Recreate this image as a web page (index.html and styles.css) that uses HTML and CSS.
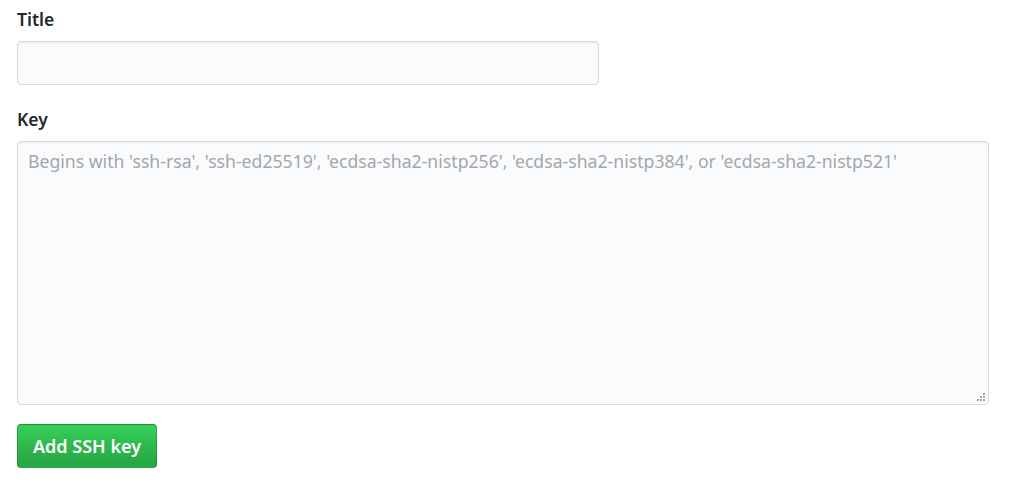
FILE: index.html
```html
<!DOCTYPE html>
<html>
<head>
<meta charset="utf-8">
<link rel="stylesheet" href="styles.css">
</head>
<body>
<form class="ssh-form">
  <div class="form-group">
    <label class="form-label" for="title">Title</label>
    <input class="form-control title-input" id="title" type="text">
  </div>
  <div class="form-group">
    <label class="form-label" for="key">Key</label>
    <div class="textarea-wrap">
      <textarea class="form-control key-input" id="key" placeholder="Begins with 'ssh-rsa', 'ssh-ed25519', 'ecdsa-sha2-nistp256', 'ecdsa-sha2-nistp384', or 'ecdsa-sha2-nistp521'"></textarea>
      <svg class="grip" width="10" height="10" viewBox="0 0 10 10">
        <rect x="7" y="1" width="2" height="2" fill="#9ea3a8"/>
        <rect x="4" y="4" width="2" height="2" fill="#9ea3a8"/>
        <rect x="7" y="4" width="2" height="2" fill="#9ea3a8"/>
        <rect x="1" y="7" width="2" height="2" fill="#9ea3a8"/>
        <rect x="4" y="7" width="2" height="2" fill="#9ea3a8"/>
        <rect x="7" y="7" width="2" height="2" fill="#9ea3a8"/>
      </svg>
    </div>
  </div>
  <button class="btn-primary" type="button">Add SSH key</button>
</form>
</body>
</html>
```

FILE: styles.css
```css
html, body {
  margin: 0;
  padding: 0;
  background: #ffffff;
}
body {
  font-family: "Noto Sans", "Open Sans", sans-serif;
  font-size: 17.5px;
  color: #24292e;
}
.ssh-form {
  display: flex;
  flex-direction: column;
  align-items: flex-start;
  padding: 7px 0 0 17px;
}
.form-group {
  display: flex;
  flex-direction: column;
  align-items: flex-start;
  margin-bottom: 22px;
}
.form-group + .form-group {
  margin-bottom: 19px;
}
.form-label {
  font-weight: 600;
  line-height: 25px;
  margin-bottom: 9px;
}
.form-control {
  box-sizing: border-box;
  font-family: inherit;
  font-size: 17.5px;
  color: #24292e;
  background: #fafbfc;
  border: 1px solid #d8dce0;
  border-radius: 4px;
  box-shadow: inset 0 1px 2px rgba(27, 31, 35, 0.075);
  outline: none;
  margin: 0;
}
.title-input {
  width: 582px;
  height: 44px;
  padding: 0 10px;
}
.textarea-wrap {
  position: relative;
  display: flex;
}
.key-input {
  width: 972px;
  height: 264px;
  padding: 7px 10px;
  line-height: 25px;
  font-size: 17.65px;
  resize: none;
  display: block;
}
.key-input::placeholder {
  color: #a2a7ac;
  opacity: 1;
}
.grip {
  position: absolute;
  right: 3px;
  bottom: 3px;
}
.btn-primary {
  box-sizing: border-box;
  width: 140px;
  height: 44px;
  font-family: inherit;
  font-size: 18px;
  font-weight: 600;
  color: #ffffff;
  background: linear-gradient(-180deg, #34d058 0%, #28a745 90%);
  border: 1px solid rgba(27, 31, 35, 0.2);
  border-radius: 4px;
  padding: 0;
  cursor: pointer;
}
```
